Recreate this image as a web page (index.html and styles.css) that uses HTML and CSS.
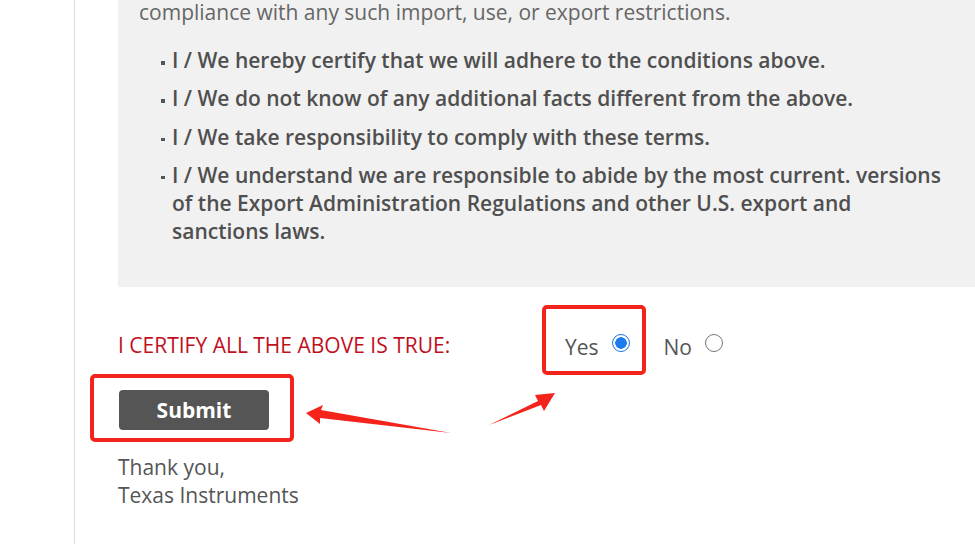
FILE: index.html
```html
<!DOCTYPE html>
<html lang="en">
<head>
<meta charset="utf-8">
<title>Export Certification</title>
<link rel="stylesheet" href="styles.css">
</head>
<body>
<div class="page">
  <div class="content">
    <div class="terms">
      <p class="terms-tail">compliance with any such import, use, or export restrictions.</p>
      <ul class="certs">
        <li>I / We hereby certify that we will adhere to the conditions above.</li>
        <li>I / We do not know of any additional facts different from the above.</li>
        <li>I / We take responsibility to comply with these terms.</li>
        <li>I / We understand we are responsible to abide by the most current. versions of the Export Administration Regulations and other U.S. export and sanctions laws.</li>
      </ul>
    </div>
    <div class="certify-row">
      <span class="certify-label">I CERTIFY ALL THE ABOVE IS TRUE:</span>
      <div class="choices">
        <label class="choice">Yes <input type="radio" name="certify" checked></label>
        <label class="choice">No <input type="radio" name="certify"></label>
      </div>
    </div>
    <button class="submit" type="button">Submit</button>
    <p class="thanks">Thank you,<br>Texas Instruments</p>
  </div>
  <div class="annotations">
    <div class="mark mark-yes"></div>
    <div class="mark mark-submit"></div>
    <svg class="arrows" width="975" height="544" viewBox="0 0 975 544">
      <polygon points="306,413 323,405 321,410 451,433 320,418 320,424" fill="#f4241c"/>
      <polygon points="555,393 544,411 541,405 489,425 538,401 535,395" fill="#f4241c"/>
    </svg>
  </div>
</div>
</body>
</html>
```
FILE: styles.css
```css
html, body {
  margin: 0;
  padding: 0;
  background: #ffffff;
}

body {
  font-family: "Open Sans", "Liberation Sans", sans-serif;
  font-size: 21px;
  color: #555555;
}

.page {
  position: relative;
  width: 975px;
  height: 544px;
  overflow: hidden;
}

.content {
  margin-left: 74px;
  border-left: 1px solid #dedede;
  padding-left: 43px;
  height: 544px;
  box-sizing: border-box;
}

.terms {
  background: #f1f1f1;
  padding: 0 30px 42px 21px;
}

.terms-tail {
  margin: 0;
  line-height: 24px;
  color: #666666;
}

.certs {
  list-style: none;
  margin: 22px 0 0;
  padding: 0 0 0 22px;
  display: flex;
  flex-direction: column;
  gap: 10.3px;
}

.certs li {
  position: relative;
  padding-left: 11px;
  line-height: 28px;
  font-weight: 600;
  color: #4f4f4f;
}

.certs li::before {
  content: "";
  position: absolute;
  left: 0;
  top: 15px;
  width: 3.5px;
  height: 3.5px;
  background: #555555;
}

.certify-row {
  display: flex;
  align-items: center;
  margin-top: 44px;
  height: 28px;
}

.certify-label {
  color: #c0101e;
  line-height: 28px;
  width: 447px;
}

.choices {
  display: flex;
  align-items: center;
  gap: 34px;
}

.choice {
  display: flex;
  align-items: center;
  gap: 13px;
  line-height: 28px;
  position: relative;
  top: 2px;
}

.choice input {
  appearance: none;
  -webkit-appearance: none;
  margin: 0;
  width: 18px;
  height: 18px;
  border-radius: 50%;
  border: 1px solid #767676;
  background: #ffffff;
  box-sizing: border-box;
  position: relative;
  top: -4px;
}

.choice input:checked {
  border-color: #1a73e8;
  background: radial-gradient(circle, #1a7cf0 0 5.5px, #ffffff 6px);
}

.submit {
  display: block;
  margin-top: 31px;
  margin-left: 1px;
  width: 150px;
  height: 40px;
  border: none;
  border-radius: 4px;
  background: #555555;
  color: #ffffff;
  font-family: "Open Sans", "Liberation Sans", sans-serif;
  font-size: 21px;
  font-weight: 700;
  padding: 0;
  cursor: pointer;
}

.thanks {
  margin: 23px 0 0;
  line-height: 28px;
  color: #555555;
}

.annotations {
  position: absolute;
  left: 0;
  top: 0;
  width: 975px;
  height: 544px;
  pointer-events: none;
}

.mark {
  position: absolute;
  border: 4px solid #f4241c;
  border-radius: 5px;
  box-sizing: border-box;
}

.mark-yes {
  left: 542px;
  top: 305px;
  width: 104px;
  height: 70px;
}

.mark-submit {
  left: 90px;
  top: 374px;
  width: 204px;
  height: 68px;
}

.arrows {
  position: absolute;
  left: 0;
  top: 0;
}
```
